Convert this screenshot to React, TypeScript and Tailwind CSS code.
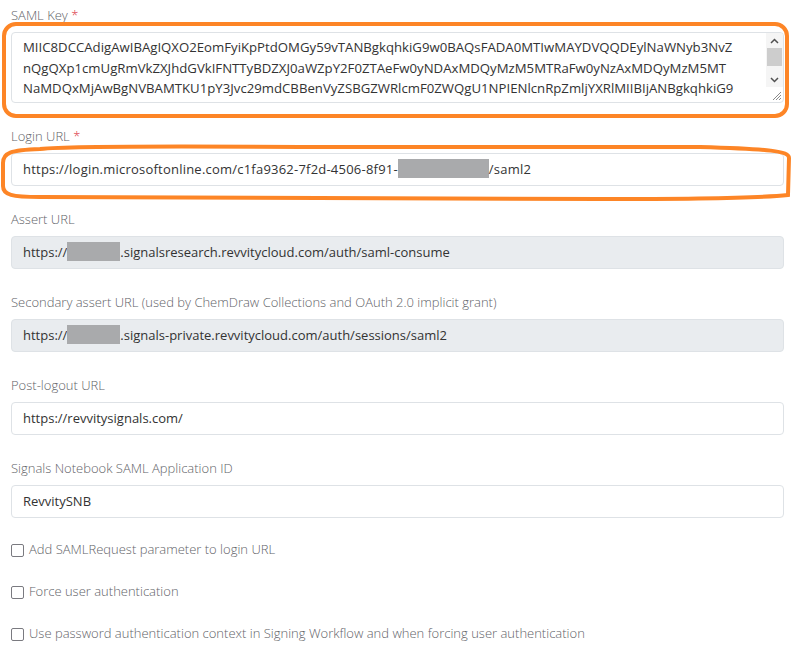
import { ReactNode } from "react";

const samlKeyLines = [
  "MIIC8DCCAdigAwIBAgIQXO2EomFyiKpPtdOMGy59vTANBgkqhkiG9w0BAQsFADA0MTIwMAYDVQQDEylNaWNyb3NvZ",
  "nQgQXp1cmUgRmVkZXJhdGVkIFNTTyBDZXJ0aWZpY2F0ZTAeFw0yNDAxMDQyMzM5MTRaFw0yNzAxMDQyMzM5MT",
  "NaMDQxMjAwBgNVBAMTKU1pY3Jvc29mdCBBenVyZSBGZWRlcmF0ZWQgU1NPIENlcnRpZmljYXRlMIIBIjANBgkqhkiG9",
];

const checkboxes = [
  "Add SAMLRequest parameter to login URL",
  "Force user authentication",
  "Use password authentication context in Signing Workflow and when forcing user authentication",
];

const font = "font-['Open_Sans','Noto_Sans',sans-serif]";

function Label({ children, required }: { children: ReactNode; required?: boolean }) {
  return (
    <div className="h-5 text-[13px] leading-5 font-light text-[#5f6368] mb-[7px] whitespace-nowrap">
      {children}
      {required && <span className="text-[#dc3545]"> *</span>}
    </div>
  );
}

function Redacted({ width }: { width: string }) {
  return <span className={`inline-block ${width} h-[19px] bg-[#a9aaac] align-middle -mt-[2px]`} />;
}

function Field({
  label,
  required,
  disabled,
  wide,
  children,
}: {
  label: string;
  required?: boolean;
  disabled?: boolean;
  wide?: boolean;
  children: ReactNode;
}) {
  return (
    <div className="mb-[23px]">
      <Label required={required}>{label}</Label>
      <div
        className={`h-[33px] flex items-center rounded-[4px] border border-[#dee2e6] px-[11px] text-[13px] text-[#333] whitespace-nowrap ${
          disabled ? "bg-[#e9ecef]" : "bg-white"
        } ${wide ? "tracking-[0.22px]" : ""}`}
      >
        {children}
      </div>
    </div>
  );
}

function FakeScrollbar() {
  return (
    <div className="w-[17px] flex flex-col">
      <div className="h-[54px] flex flex-col bg-[#f5f5f5]">
        <div className="h-[15px] flex items-center justify-center">
          <svg width="9" height="6" viewBox="0 0 9 6">
            <path d="M1 5 L4.5 1.5 L8 5" fill="none" stroke="#505050" strokeWidth="1.5" />
          </svg>
        </div>
        <div className="h-[18px] mx-[1px] bg-[#cdcdcd]" />
        <div className="flex-1" />
        <div className="h-[14px] flex items-center justify-center">
          <svg width="9" height="6" viewBox="0 0 9 6">
            <path d="M1 1 L4.5 4.5 L8 1" fill="none" stroke="#505050" strokeWidth="1.5" />
          </svg>
        </div>
      </div>
      <div className="flex-1 flex items-end justify-end pr-[1px] pb-[1px]">
        <svg width="12" height="12" viewBox="0 0 12 12">
          <path d="M11 3 L3 11 M11 6 L6 11 M11 9 L9 11" stroke="#8a8a8a" strokeWidth="1" />
        </svg>
      </div>
    </div>
  );
}

export default function App() {
  return (
    <div className={`relative w-[794px] h-[650px] bg-white overflow-hidden ${font}`}>
      <div className="pl-[11px] pr-[10px] pt-[5px]">
        <div className="mb-[23px]">
          <Label required>SAML Key</Label>
          <div className="h-[71px] flex rounded-[4px] border border-[#dee2e6] bg-white overflow-hidden">
            <div className="flex-1 pl-[11px] pt-[4px] text-[13.2px] leading-[20.5px] text-[#333] overflow-hidden">
              {samlKeyLines.map((line) => (
                <div key={line} className="whitespace-nowrap overflow-hidden">
                  {line}
                </div>
              ))}
            </div>
            <FakeScrollbar />
          </div>
        </div>

        <Field label="Login URL" required wide>
          https://login.microsoftonline.com/c1fa9362-7f2d-4506-8f91-
          <Redacted width="w-[91px]" />
          /saml2
        </Field>

        <Field label="Assert URL" disabled>
          https://
          <Redacted width="w-[53px]" />
          .signalsresearch.revvitycloud.com/auth/saml-consume
        </Field>

        <Field label="Secondary assert URL (used by ChemDraw Collections and OAuth 2.0 implicit grant)" disabled>
          https://
          <Redacted width="w-[53px]" />
          .signals-private.revvitycloud.com/auth/sessions/saml2
        </Field>

        <Field label="Post-logout URL">https://revvitysignals.com/</Field>

        <Field label="Signals Notebook SAML Application ID">RevvitySNB</Field>

        <div className="-mt-[1px] flex flex-col gap-[22px]">
          {checkboxes.map((text) => (
            <label key={text} className="h-5 flex items-center gap-[5px] text-[13px] font-light text-[#5f6368] whitespace-nowrap">
              <span className="w-[13px] h-[13px] rounded-[2px] border-[1.5px] border-[#7a7a80] bg-white" />
              {text}
            </label>
          ))}
        </div>
      </div>

      {/* orange highlight around the key textarea */}
      <div className="absolute left-[2px] top-[22px] w-[787px] h-[96px] rounded-[14px] border-[4px] border-[#fd8526] pointer-events-none" />

      {/* hand-drawn loop around the login url */}
      <svg className="absolute left-0 top-0 pointer-events-none" width="794" height="210">
        <path
          d="M 40 149 C 10 150, 3 153, 3 163 L 3 186 C 3 195, 12 197, 40 197 L 600 199 C 700 199, 760 198, 788 195 L 789 158 C 789 151, 770 149, 700 147 L 300 147 C 150 146, 60 147, 40 149 Z"
          fill="none"
          stroke="#fd8526"
          strokeWidth="4"
        />
      </svg>
    </div>
  );
}
